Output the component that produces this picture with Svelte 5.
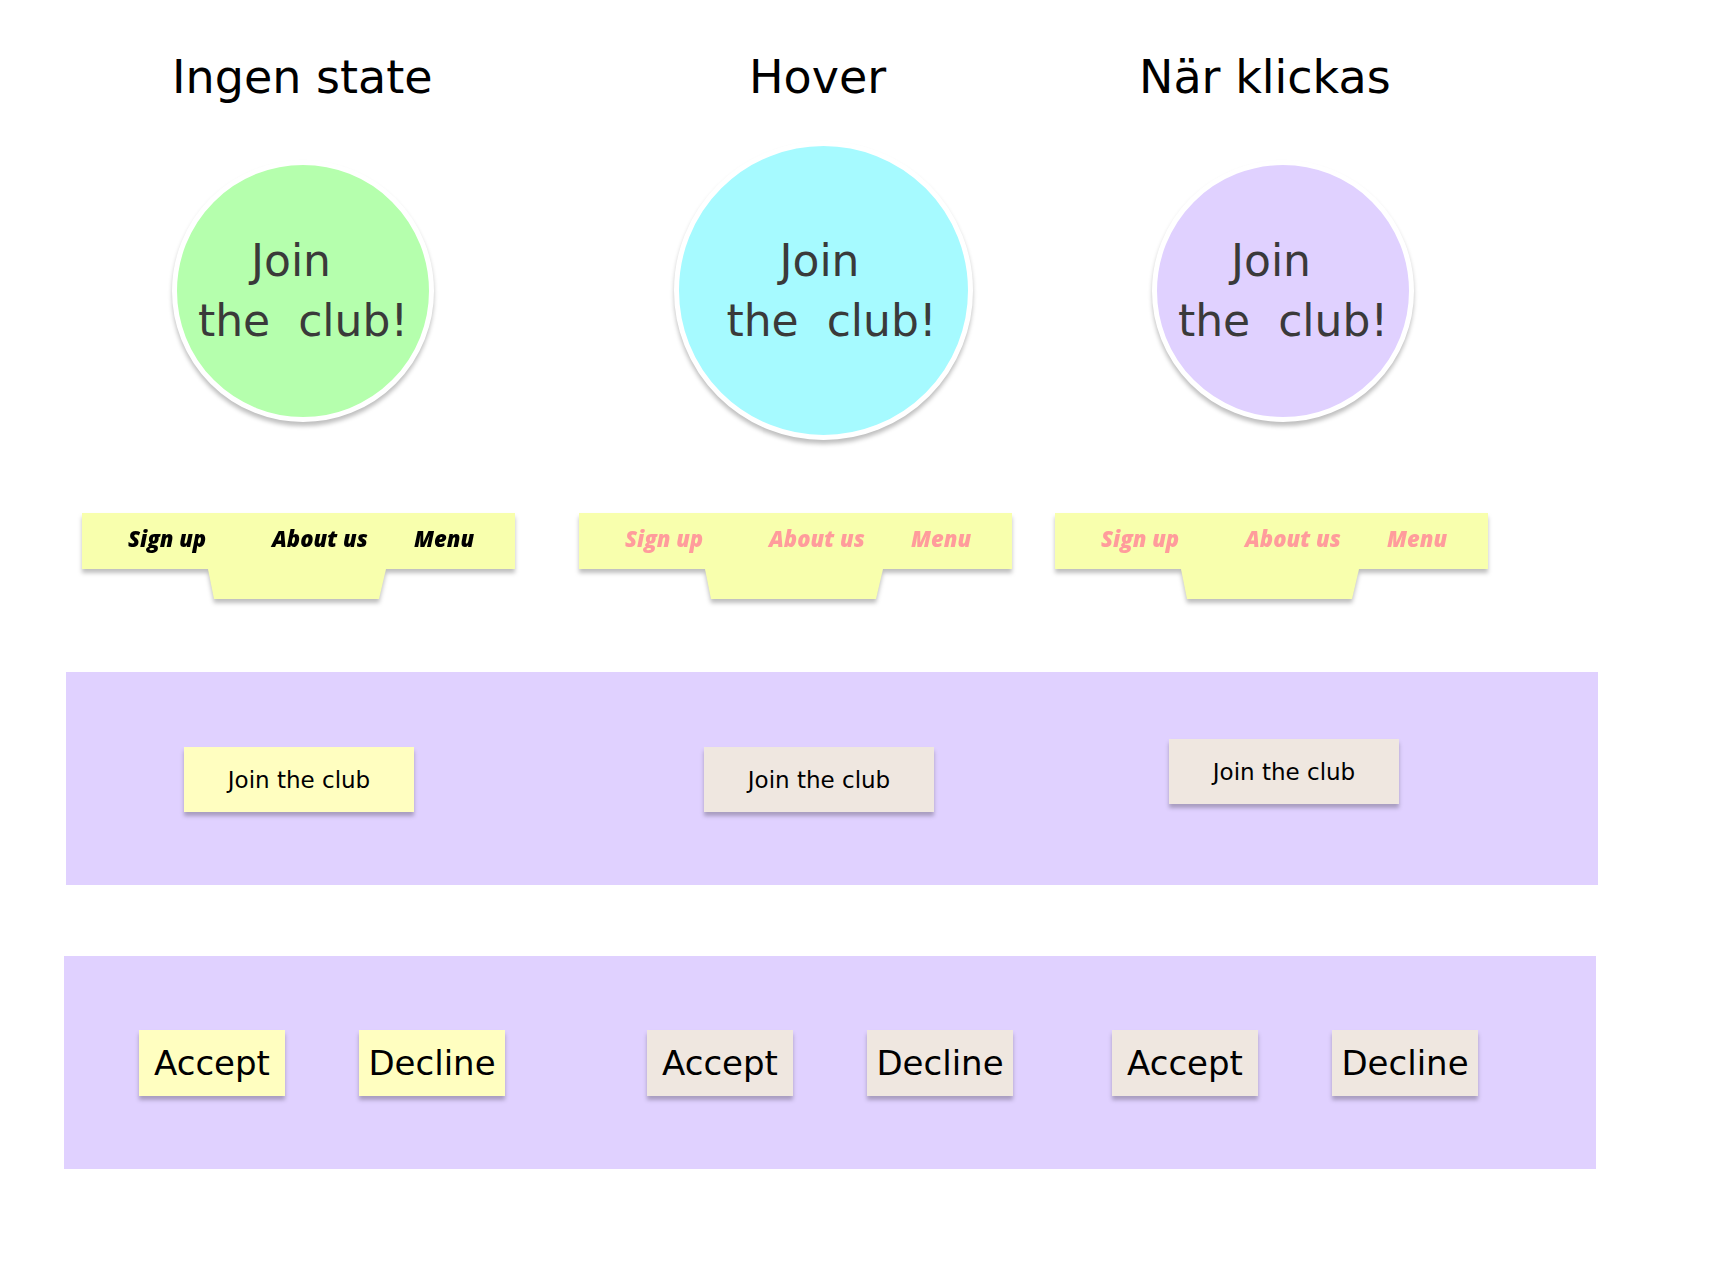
<script>
  const states = [
    { id: 'idle', title: 'Ingen state' },
    { id: 'hover', title: 'Hover' },
    { id: 'pressed', title: 'När klickas' }
  ];
  const links = ['Sign up', 'About us', 'Menu'];
</script>

<main>
  <div class="row titles">
    {#each states as state (state.id)}
      <h2>{state.title}</h2>
    {/each}
  </div>

  <div class="row circles">
    {#each states as state (state.id)}
      <button type="button" class="circle {state.id}">
        <span class="first">Join</span>
        <span>the&nbsp; club!</span>
      </button>
    {/each}
  </div>

  <div class="row navs">
    {#each states as state (state.id)}
      <nav class={state.id} aria-label={state.title}>
        <div class="links">
          {#each links as link (link)}
            <a href="#top">{link}</a>
          {/each}
        </div>
        <div class="tab"></div>
      </nav>
    {/each}
  </div>

  <section class="row panel join">
    {#each states as state (state.id)}
      <button type="button" class="card {state.id}">Join the club</button>
    {/each}
  </section>

  <section class="row panel choice">
    {#each states as state (state.id)}
      <div class="pair">
        <button type="button" class="card {state.id}">Accept</button>
        <button type="button" class="card {state.id}">Decline</button>
      </div>
    {/each}
  </section>
</main>

<style>
  :global(body) {
    margin: 0;
    background: #fff;
  }

  main {
    padding: 46px 0 98px;
    font-family: 'DejaVu Sans', Verdana, sans-serif;
    color: #000;
  }

  .row {
    display: grid;
    align-items: center;
    justify-items: start;
  }

  h2 {
    margin: 0;
    font-size: 46px;
    font-weight: 400;
    line-height: 62px;
    white-space: nowrap;
  }

  button {
    box-sizing: border-box;
    margin: 0;
    padding: 0;
    border: 0;
    font-family: inherit;
    color: #000;
    cursor: pointer;
    white-space: nowrap;
    box-shadow: 0 4px 4px rgba(0, 0, 0, 0.25);
  }

  .titles {
    grid-template-columns: minmax(0, 577fr) minmax(0, 390fr) minmax(0, 581fr);
    padding-left: 172px;
  }

  .circles {
    grid-template-columns: minmax(0, 502fr) minmax(0, 478fr) minmax(0, 568fr);
    padding-left: 172px;
    margin-top: 33px;
  }

  .circle {
    display: flex;
    flex-direction: column;
    align-items: center;
    justify-content: center;
    width: 262px;
    height: 262px;
    border: 5px solid #fff;
    border-radius: 50%;
    font-size: 44px;
    line-height: 60px;
    color: #3a3a3a;
  }

  .circle .first {
    padding-right: 24px;
  }

  .circle.idle {
    background: #b5ffad;
  }

  .circle.hover {
    width: 299px;
    height: 299px;
    padding-left: 16px;
    background: #a6faff;
  }

  .circle.pressed {
    background: #e0d1ff;
  }

  .navs {
    grid-template-columns: minmax(0, 497fr) minmax(0, 476fr) minmax(0, 665fr);
    padding-left: 82px;
    margin-top: 73px;
  }

  nav {
    width: 433px;
    color: #ff9c9c;
    filter: drop-shadow(0 4px 2px rgba(0, 0, 0, 0.25));
  }

  nav.idle {
    color: #000;
  }

  .links {
    display: grid;
    grid-template-columns: 144px 142px auto;
    box-sizing: border-box;
    height: 56px;
    padding: 9px 0 0 46px;
    background: #f8ffad;
    font-family: 'Open Sans', Lato, sans-serif;
    font-size: 22px;
    font-style: italic;
    font-weight: 800;
    line-height: 32px;
  }

  a {
    color: inherit;
    text-decoration: none;
    white-space: nowrap;
  }

  .tab {
    width: 178px;
    height: 30px;
    margin-left: 126px;
    background: #f8ffad;
    clip-path: polygon(0 0, 100% 0, 171px 100%, 6px 100%);
  }

  .panel {
    background: #e0d1ff;
  }

  .join {
    grid-template-columns: minmax(0, 520fr) minmax(0, 465fr) minmax(0, 429fr);
    margin: 73px 122px 0 66px;
    padding: 75px 0 73px 118px;
  }

  .choice {
    grid-template-columns: minmax(0, 508fr) minmax(0, 465fr) minmax(0, 484fr);
    margin: 71px 124px 0 64px;
    padding: 74px 0 73px 75px;
  }

  .card {
    background: #efe7e0;
  }

  .card.idle {
    background: #fffec0;
  }

  .join .card {
    width: 230px;
    height: 65px;
    font-size: 23px;
  }

  .join .pressed {
    transform: translateY(-8px);
  }

  .pair {
    display: flex;
    gap: 74px;
  }

  .choice .card {
    width: 146px;
    height: 66px;
    font-size: 34px;
  }
</style>
